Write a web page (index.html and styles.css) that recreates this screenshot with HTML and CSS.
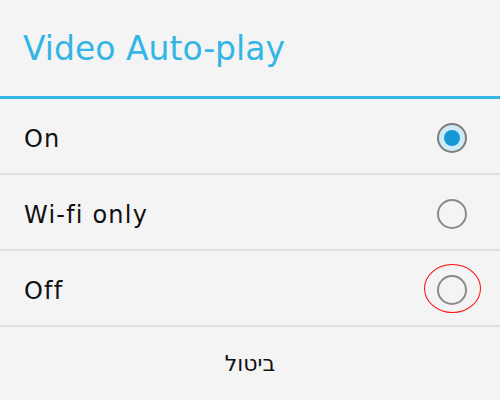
FILE: index.html
```html
<!DOCTYPE html>
<html lang="en">
<head>
<meta charset="utf-8">
<link rel="stylesheet" href="styles.css">
</head>
<body>
<div class="dialog">
  <div class="header"><h1 class="title">Video Auto-play</h1></div>
  <ul class="options">
    <li class="option">
      <span class="label">On</span>
      <span class="radio checked"><span class="dot"></span></span>
    </li>
    <li class="option">
      <span class="label">Wi-fi only</span>
      <span class="radio"></span>
    </li>
    <li class="option">
      <span class="label">Off</span>
      <span class="radio marked"></span>
    </li>
  </ul>
  <div class="footer"><button class="cancel" dir="rtl">ביטול</button></div>
</div>
</body>
</html>
```

FILE: styles.css
```css
html, body {
  margin: 0;
  padding: 0;
  background: #f4f4f4;
}
.dialog {
  width: 500px;
  height: 400px;
  display: flex;
  flex-direction: column;
  font-family: "DejaVu Sans", sans-serif;
  background: #f4f4f4;
}
.header {
  height: 96px;
  border-bottom: 3px solid #33b5e5;
  display: flex;
  align-items: center;
  padding-left: 23px;
  box-sizing: content-box;
}
.title {
  margin: 0;
  font-weight: 400;
  font-size: 33px;
  color: #33b5e5;
}
.options {
  list-style: none;
  margin: 0;
  padding: 0;
}
.option {
  box-sizing: border-box;
  height: 76px;
  border-bottom: 2px solid #dedede;
  display: flex;
  align-items: center;
  justify-content: space-between;
  padding: 3px 33px 0 24px;
}
.label {
  font-size: 24px;
  letter-spacing: 1.2px;
  color: #111;
  padding-top: 2px;
}
.radio {
  position: relative;
  width: 26px;
  height: 26px;
  border: 2px solid #8a8a8a;
  border-radius: 50%;
  display: flex;
  align-items: center;
  justify-content: center;
}
.radio.checked {
  background: #cdeaf6;
  border-color: #7d7d7d;
}
.dot {
  width: 16px;
  height: 16px;
  border-radius: 50%;
  background: #1497d3;
}
.radio.marked::after {
  content: "";
  position: absolute;
  left: -15px;
  top: -13px;
  width: 55px;
  height: 47px;
  border: 1.5px solid #ff1010;
  border-radius: 50%;
}
.footer {
  flex: 1;
  display: flex;
  align-items: center;
  justify-content: center;
}
.cancel {
  background: none;
  border: none;
  font-family: "DejaVu Sans", sans-serif;
  font-size: 22px;
  color: #111;
  padding: 0;
}
```
